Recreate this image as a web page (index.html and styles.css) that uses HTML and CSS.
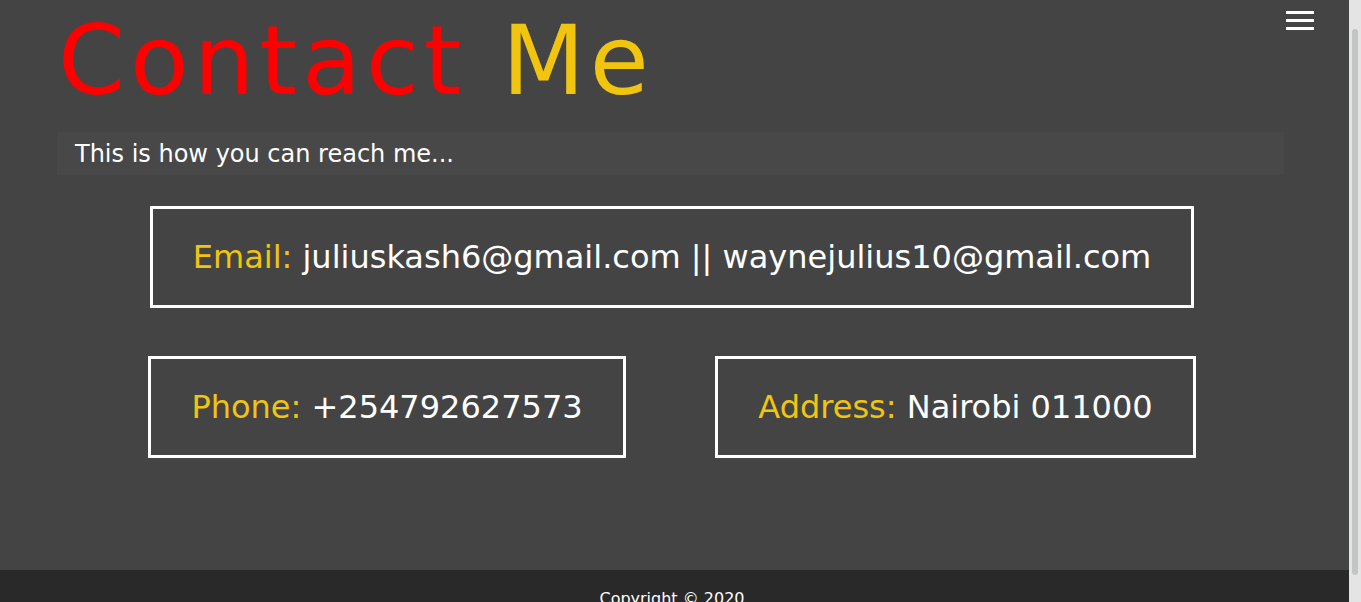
FILE: index.html
```html
<!DOCTYPE html>
<html lang="en">
<head>
<meta charset="utf-8">
<title>Contact Me</title>
<link rel="stylesheet" href="styles.css">
</head>
<body>
  <div class="shell">
    <button class="menu-toggle" aria-label="Menu">
      <span class="bar"></span>
      <span class="bar"></span>
      <span class="bar"></span>
    </button>
    <main class="page">
      <h1 class="title"><span class="red">Contact</span> <span class="yellow">Me</span></h1>
      <p class="lead">This is how you can reach me...</p>
      <section class="cards">
        <div class="card card-wide"><span class="yellow">Email:</span> juliuskash6@gmail.com || waynejulius10@gmail.com</div>
        <div class="card-row">
          <div class="card"><span class="yellow">Phone:</span> +254792627573</div>
          <div class="card"><span class="yellow">Address:</span> Nairobi 011000</div>
        </div>
      </section>
    </main>
    <footer class="footer">Copyright © 2020</footer>
  </div>
  <div class="scrollbar" aria-hidden="true"><div class="scroll-thumb"></div></div>
</body>
</html>
```
FILE: styles.css
```css
html, body {
  margin: 0;
  padding: 0;
}
body {
  background: #444444;
  color: #ffffff;
  font-family: "DejaVu Sans", sans-serif;
}
.shell {
  position: relative;
  margin-right: 12px;
}
.scrollbar {
  position: fixed;
  top: 0;
  right: 0;
  width: 12px;
  height: 100%;
  background: #e4e4e4;
  box-sizing: border-box;
  padding: 29px 3px 27px;
}
.scroll-thumb {
  height: 100%;
  border-radius: 3px;
  background: #c3c4c4;
}
.menu-toggle {
  position: absolute;
  top: 11px;
  right: 35px;
  width: 28px;
  padding: 0;
  border: 0;
  background: transparent;
  display: flex;
  flex-direction: column;
  gap: 5px;
  cursor: pointer;
}
.menu-toggle .bar {
  display: block;
  height: 3px;
  width: 28px;
  background: #ffffff;
}
.page {
  padding: 5px 65px 112px 57px;
}
.title {
  margin: 0 0 0 1px;
  font-size: 96px;
  font-weight: normal;
  letter-spacing: 5px;
  line-height: normal;
}
.red { color: #ff0000; }
.yellow { color: #f1c40f; }
.lead {
  margin: 15px 0 0 0;
  background: #484848;
  font-size: 24px;
  line-height: 28px;
  padding: 8px 18px 7px 18px;
}
.cards {
  width: 1048px;
  margin: 31px 0 0 91px;
  display: flex;
  flex-direction: column;
  gap: 48px;
}
.card {
  border: 3px solid #ffffff;
  font-size: 32px;
  line-height: 37px;
  padding: 30px 0 29px;
  text-align: center;
  white-space: nowrap;
}
.card-wide {
  margin: 0 2px;
}
.card-row {
  display: grid;
  grid-template-columns: 478px 481px;
  column-gap: 89px;
}
.footer {
  background: #292929;
  color: #ffffff;
  font-size: 16px;
  line-height: 19px;
  padding: 19px 5px 19px 0;
  text-align: center;
}
```
